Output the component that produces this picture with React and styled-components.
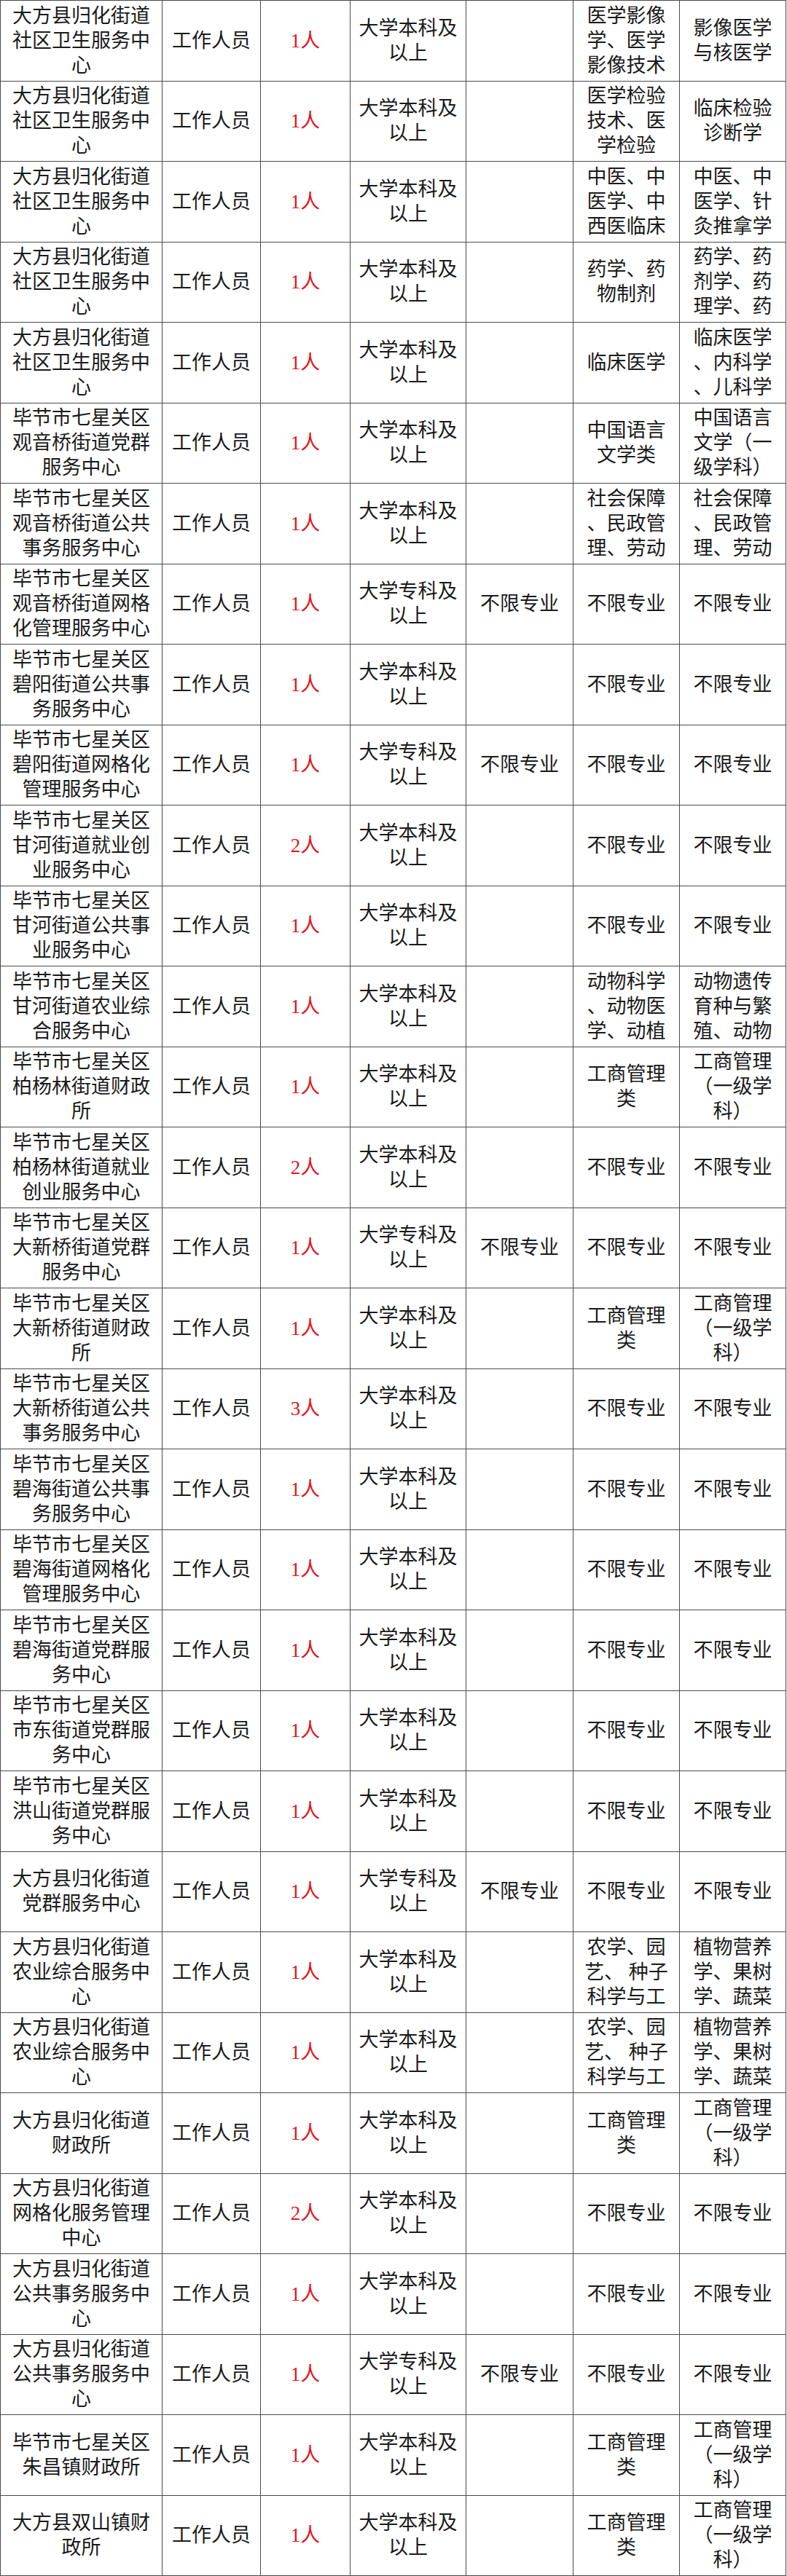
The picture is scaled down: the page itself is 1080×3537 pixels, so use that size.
import React from 'react';
import styled, { createGlobalStyle } from 'styled-components';

const GlobalStyle = createGlobalStyle`
  html, body {
    margin: 0;
    padding: 0;
    background: #fff;
  }
  body {
    font-family: "Liberation Serif", "Noto Sans CJK SC", serif;
    color: #1a1a1a;
  }
`;

const Sheet = styled.div`
  display: grid;
  grid-template-columns: 222px 135px 123px 159px 147px 146px 146px;
  grid-auto-rows: 110.5px;
  width: max-content;
  border-top: 1px solid #4a4a4a;
  border-left: 1px solid #4a4a4a;
`;

const Cell = styled.div`
  box-sizing: border-box;
  display: flex;
  align-items: center;
  justify-content: center;
  padding: 0 8px;
  border-right: 1px solid #4a4a4a;
  border-bottom: 1px solid #4a4a4a;
  overflow: hidden;
  text-align: center;
  font-size: 27px;
  line-height: 34px;
  line-break: anywhere;
  word-break: break-all;
  color: ${p => (p.$tone === 'red' ? '#e3141b' : '#1a1a1a')};
`;

const SHE = '大方县归化街道社区卫生服务中心';
const BK = '大学本科及以上';
const ZK = '大学专科及以上';
const BX = '不限专业';
const GS = '工商管理类';
const GS1 = '工商管理（一级学科）';

const rows = [
  [SHE, '1人', BK, '', '医学影像学、医学影像技术', '影像医学与核医学'],
  [SHE, '1人', BK, '', '医学检验技术、医学检验', '临床检验诊断学'],
  [SHE, '1人', BK, '', '中医、中医学、中西医临床', '中医、中医学、针灸推拿学'],
  [SHE, '1人', BK, '', '药学、药物制剂', '药学、药剂学、药理学、药'],
  [SHE, '1人', BK, '', '临床医学', '临床医学、内科学、儿科学'],
  ['毕节市七星关区观音桥街道党群服务中心', '1人', BK, '', '中国语言文学类', '中国语言文学（一级学科）'],
  ['毕节市七星关区观音桥街道公共事务服务中心', '1人', BK, '', '社会保障、民政管理、劳动', '社会保障、民政管理、劳动'],
  ['毕节市七星关区观音桥街道网格化管理服务中心', '1人', ZK, BX, BX, BX],
  ['毕节市七星关区碧阳街道公共事务服务中心', '1人', BK, '', BX, BX],
  ['毕节市七星关区碧阳街道网格化管理服务中心', '1人', ZK, BX, BX, BX],
  ['毕节市七星关区甘河街道就业创业服务中心', '2人', BK, '', BX, BX],
  ['毕节市七星关区甘河街道公共事业服务中心', '1人', BK, '', BX, BX],
  ['毕节市七星关区甘河街道农业综合服务中心', '1人', BK, '', '动物科学、动物医学、动植', '动物遗传育种与繁殖、动物'],
  ['毕节市七星关区柏杨林街道财政所', '1人', BK, '', GS, GS1],
  ['毕节市七星关区柏杨林街道就业创业服务中心', '2人', BK, '', BX, BX],
  ['毕节市七星关区大新桥街道党群服务中心', '1人', ZK, BX, BX, BX],
  ['毕节市七星关区大新桥街道财政所', '1人', BK, '', GS, GS1],
  ['毕节市七星关区大新桥街道公共事务服务中心', '3人', BK, '', BX, BX],
  ['毕节市七星关区碧海街道公共事务服务中心', '1人', BK, '', BX, BX],
  ['毕节市七星关区碧海街道网格化管理服务中心', '1人', BK, '', BX, BX],
  ['毕节市七星关区碧海街道党群服务中心', '1人', BK, '', BX, BX],
  ['毕节市七星关区市东街道党群服务中心', '1人', BK, '', BX, BX],
  ['毕节市七星关区洪山街道党群服务中心', '1人', BK, '', BX, BX],
  ['大方县归化街道党群服务中心', '1人', ZK, BX, BX, BX],
  ['大方县归化街道农业综合服务中心', '1人', BK, '', '农学、园艺、 种子科学与工', '植物营养学、果树学、蔬菜'],
  ['大方县归化街道农业综合服务中心', '1人', BK, '', '农学、园艺、 种子科学与工', '植物营养学、果树学、蔬菜'],
  ['大方县归化街道财政所', '1人', BK, '', GS, GS1],
  ['大方县归化街道网格化服务管理中心', '2人', BK, '', BX, BX],
  ['大方县归化街道公共事务服务中心', '1人', BK, '', BX, BX],
  ['大方县归化街道公共事务服务中心', '1人', ZK, BX, BX, BX],
  ['毕节市七星关区朱昌镇财政所', '1人', BK, '', GS, GS1],
  ['大方县双山镇财政所', '1人', BK, '', GS, GS1],
];

const App = () => (
  <>
    <GlobalStyle />
    <Sheet>
      {rows.map(([unit, count, edu, major, bachelor, master], idx) => (
        <React.Fragment key={idx}>
          <Cell>{unit}</Cell>
          <Cell>工作人员</Cell>
          <Cell $tone="red">{count}</Cell>
          <Cell>{edu}</Cell>
          <Cell>{major}</Cell>
          <Cell>{bachelor}</Cell>
          <Cell>{master}</Cell>
        </React.Fragment>
      ))}
    </Sheet>
  </>
);

export default App;
